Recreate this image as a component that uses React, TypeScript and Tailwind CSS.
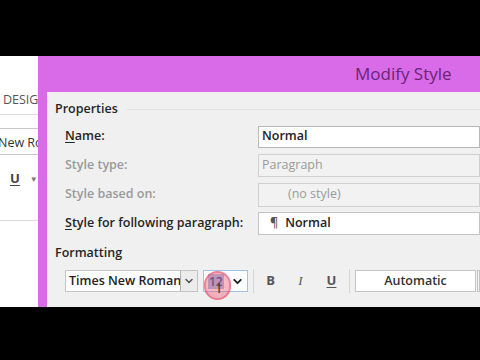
import { ChevronDown } from "lucide-react";

const font = { fontFamily: '"Open Sans", "Noto Sans", sans-serif' };

const Row = ({
    label,
    underline,
    rest,
    muted,
    box,
}: {
    label?: string;
    underline?: string;
    rest?: string;
    muted?: boolean;
    box: React.ReactNode;
}) => (
    <div className="h-[29px] flex items-center">
        <div className={`w-[211px] pl-[18px] text-[12.5px] font-semibold ${muted ? "text-[#9a9a9a]" : "text-[#262626]"}`}>
            {underline ? (
                <>
                    <span className="underline underline-offset-2">{underline}</span>
                    {rest}
                </>
            ) : (
                label
            )}
        </div>
        {box}
    </div>
);

const App = () => {
    return (
        <div className="w-[480px] h-[360px] bg-black flex flex-col overflow-hidden" style={font}>
            <div className="h-[56px] shrink-0" />

            <div className="h-[251px] shrink-0 flex">
                {/* word ribbon behind the dialog */}
                <div className="w-[38px] shrink-0 bg-white overflow-hidden flex flex-col">
                    <div className="h-[59px] flex items-end pb-[4px] pl-[3px] border-b border-[#dcdcdc] text-[12.5px] text-[#555] whitespace-nowrap">
                        DESIGN
                    </div>
                    <div className="h-[13px]" />
                    <div className="h-[27px] border-y border-[#c8c8c8] flex items-center pt-[3px] -ml-[2px] text-[12.5px] text-[#333] whitespace-nowrap">
                        New Roman
                    </div>
                    <div className="h-[66px] border-b border-[#dcdcdc] flex items-start pt-[14px] pl-[10px] gap-[10px]">
                        <span className="text-[13px] font-bold text-[#444] underline underline-offset-2">U</span>
                        <span className="text-[8px] text-[#777] mt-[4px]">▼</span>
                    </div>
                </div>

                {/* dialog */}
                <div className="flex-1 bg-[#d96ae8] pl-[9px] flex flex-col">
                    <div className="h-[36px] shrink-0 flex items-center pl-[308px] text-[17px] text-[#6a2478]">
                        Modify Style
                    </div>
                    <div className="flex-1 bg-[#f0f0f0] flex flex-col">
                        <div className="h-[30px] pt-[4px] flex items-center pl-[8px] gap-[8px]">
                            <span className="text-[12.5px] font-semibold text-[#262626]">Properties</span>
                            <div className="flex-1 h-px bg-[#e4e4e4]" />
                        </div>

                        <Row
                            underline="N"
                            rest="ame:"
                            box={
                                <div className="flex-1 h-[22px] bg-white border border-[#b8b8b8] flex items-center pl-[3px] text-[12.5px] font-semibold text-[#222]">
                                    Normal
                                </div>
                            }
                        />
                        <Row
                            label="Style type:"
                            muted
                            box={
                                <div className="flex-1 h-[23px] bg-[#f2f2f2] border border-[#d0d0d0] flex items-center pl-[3px] text-[12.5px] text-[#9a9a9a]">
                                    Paragraph
                                </div>
                            }
                        />
                        <Row
                            label="Style based on:"
                            muted
                            box={
                                <div className="flex-1 h-[24px] bg-[#f2f2f2] border border-[#d0d0d0] flex items-center pl-[29px] text-[12.5px] text-[#9a9a9a]">
                                    (no style)
                                </div>
                            }
                        />
                        <Row
                            underline="S"
                            rest="tyle for following paragraph:"
                            box={
                                <div className="flex-1 h-[23px] bg-white border border-[#c4c4c4] flex items-center pl-[11px] gap-[7px] text-[12.5px] font-semibold text-[#222]">
                                    <span className="text-[#555]">¶</span>
                                    Normal
                                </div>
                            }
                        />

                        <div className="h-[30px] flex items-center pl-[8px] text-[12.5px] font-semibold text-[#262626]">
                            Formatting
                        </div>

                        <div className="h-[26px] flex items-center pl-[18px]">
                            <div className="w-[133px] h-[22px] bg-white border border-[#c4c4c4] flex">
                                <div className="flex-1 flex items-center pl-[3px] text-[12.5px] font-semibold text-[#222] whitespace-nowrap overflow-hidden">
                                    Times New Roman
                                </div>
                                <div className="w-[17px] bg-[#ececec] border-l border-[#b0b0b0] flex items-center justify-center">
                                    <ChevronDown size={12} strokeWidth={3} className="text-[#555]" />
                                </div>
                            </div>

                            <div className="relative ml-[5px] w-[45px] h-[22px] bg-white border border-[#9ec3e6] flex items-center">
                                <span className="ml-[4px] px-[1px] bg-[#9fc4ea] text-[12px] font-semibold text-[#1f4f8f] leading-[15px]">12</span>
                                <ChevronDown size={13} strokeWidth={3.5} className="ml-auto mr-[3px] text-[#222]" />
                                <div className="absolute left-[0px] top-[0px] w-[27px] h-[29px] rounded-full bg-[#ef4f6b]/40 border-2 border-[#e8506a]/55" />
                                <span className="absolute left-[13px] top-[9px] text-[15px] leading-none text-[#333]">I</span>
                            </div>

                            <div className="ml-[5px] w-px h-[24px] bg-[#d4d4d4]" />
                            <div className="w-[93px] flex items-center text-[13px] text-[#555]">
                                <span className="w-[31px] text-center font-bold pl-[2px]">B</span>
                                <span className="w-[31px] text-center italic" style={{ fontFamily: '"Liberation Serif", serif' }}>
                                    I
                                </span>
                                <span className="w-[31px] text-center font-bold underline underline-offset-2">U</span>
                            </div>
                            <div className="ml-[2px] w-px h-[24px] bg-[#d4d4d4]" />

                            <div className="ml-[5px] w-[121px] h-[22px] bg-white border border-[#c4c4c4] flex items-center justify-center text-[12.5px] font-semibold text-[#333]">
                                Automatic
                            </div>
                            <div className="ml-[1px] flex-1 h-[22px] border border-[#c4c4c4] bg-[#f4f4f4]" />
                        </div>
                    </div>
                </div>
            </div>

            <div className="flex-1" />
        </div>
    );
};

export default App;
